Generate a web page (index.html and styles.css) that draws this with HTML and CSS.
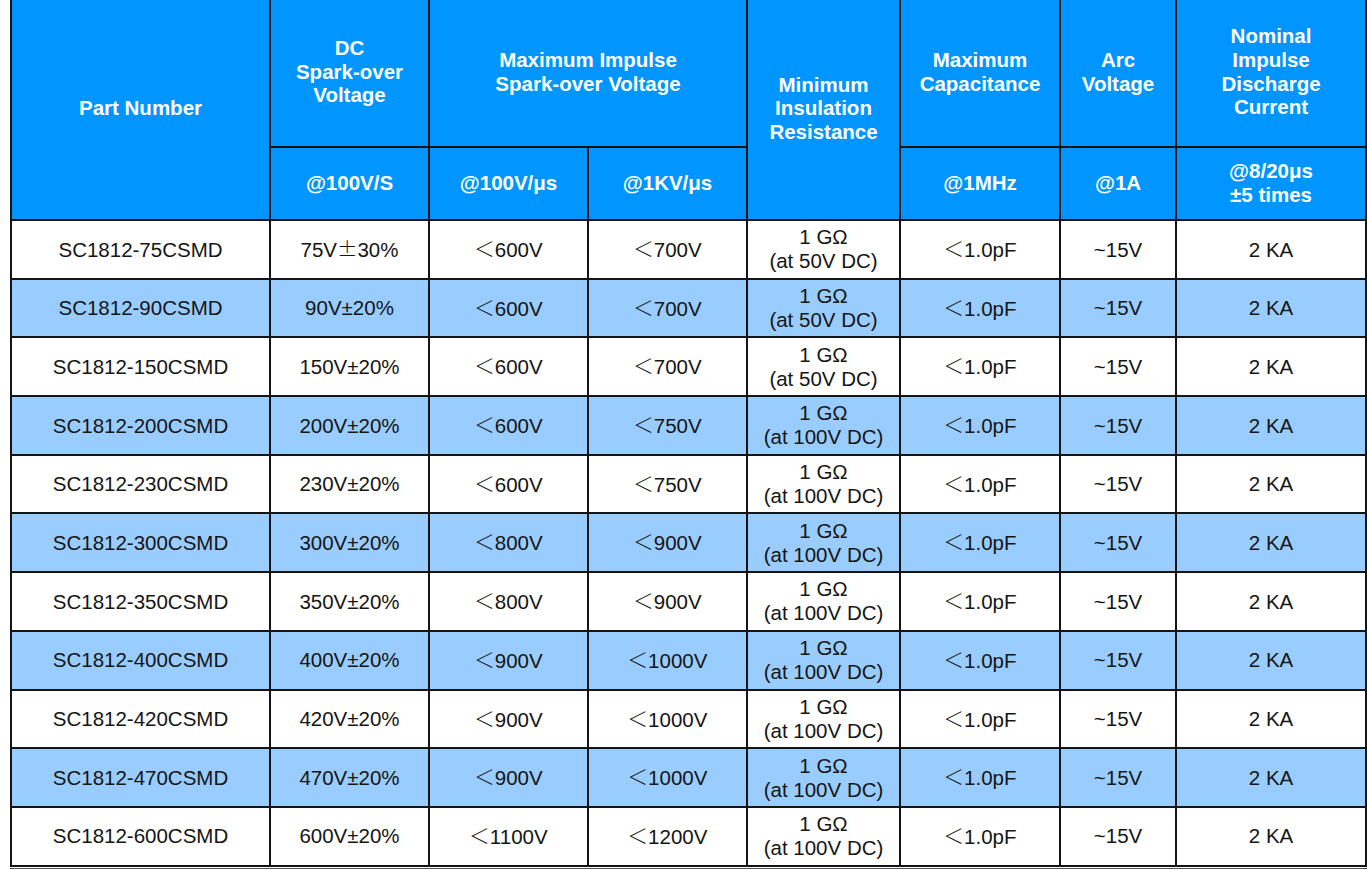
FILE: index.html
```html
<!DOCTYPE html>
<html>
<head>
<meta charset="utf-8">
<link rel="stylesheet" href="styles.css">
</head>
<body>
<div class="sheet">
<table class="spec">
  <colgroup>
    <col class="c-part"><col class="c-dc"><col class="c-imp"><col class="c-imp"><col class="c-ins"><col class="c-cap"><col class="c-arc"><col class="c-cur">
  </colgroup>
  <thead>
    <tr class="h1">
      <th rowspan="2">Part Number</th>
      <th>DC<br>Spark-over<br>Voltage</th>
      <th colspan="2">Maximum Impulse<br>Spark-over Voltage</th>
      <th rowspan="2" class="ins">Minimum<br>Insulation<br>Resistance</th>
      <th>Maximum<br>Capacitance</th>
      <th>Arc<br>Voltage</th>
      <th>Nominal<br>Impulse<br>Discharge<br>Current</th>
    </tr>
    <tr class="h2">
      <th>@100V/S</th>
      <th>@100V/μs</th>
      <th>@1KV/μs</th>
      <th>@1MHz</th>
      <th>@1A</th>
      <th>@8/20μs<br>±5 times</th>
    </tr>
  </thead>
  <tbody>
    <tr><td>SC1812-75CSMD</td><td>75V<span class="cjk">±</span>30%</td><td><span class="cjk">＜</span>600V</td><td><span class="cjk">＜</span>700V</td><td class="ins">1 GΩ<br>(at 50V DC)</td><td><span class="cjk">＜</span>1.0pF</td><td>~15V</td><td>2 KA</td></tr>
    <tr class="alt"><td>SC1812-90CSMD</td><td>90V±20%</td><td><span class="cjk">＜</span>600V</td><td><span class="cjk">＜</span>700V</td><td class="ins">1 GΩ<br>(at 50V DC)</td><td><span class="cjk">＜</span>1.0pF</td><td>~15V</td><td>2 KA</td></tr>
    <tr><td>SC1812-150CSMD</td><td>150V±20%</td><td><span class="cjk">＜</span>600V</td><td><span class="cjk">＜</span>700V</td><td class="ins">1 GΩ<br>(at 50V DC)</td><td><span class="cjk">＜</span>1.0pF</td><td>~15V</td><td>2 KA</td></tr>
    <tr class="alt"><td>SC1812-200CSMD</td><td>200V±20%</td><td><span class="cjk">＜</span>600V</td><td><span class="cjk">＜</span>750V</td><td class="ins">1 GΩ<br>(at 100V DC)</td><td><span class="cjk">＜</span>1.0pF</td><td>~15V</td><td>2 KA</td></tr>
    <tr><td>SC1812-230CSMD</td><td>230V±20%</td><td><span class="cjk">＜</span>600V</td><td><span class="cjk">＜</span>750V</td><td class="ins">1 GΩ<br>(at 100V DC)</td><td><span class="cjk">＜</span>1.0pF</td><td>~15V</td><td>2 KA</td></tr>
    <tr class="alt"><td>SC1812-300CSMD</td><td>300V±20%</td><td><span class="cjk">＜</span>800V</td><td><span class="cjk">＜</span>900V</td><td class="ins">1 GΩ<br>(at 100V DC)</td><td><span class="cjk">＜</span>1.0pF</td><td>~15V</td><td>2 KA</td></tr>
    <tr><td>SC1812-350CSMD</td><td>350V±20%</td><td><span class="cjk">＜</span>800V</td><td><span class="cjk">＜</span>900V</td><td class="ins">1 GΩ<br>(at 100V DC)</td><td><span class="cjk">＜</span>1.0pF</td><td>~15V</td><td>2 KA</td></tr>
    <tr class="alt"><td>SC1812-400CSMD</td><td>400V±20%</td><td><span class="cjk">＜</span>900V</td><td><span class="cjk">＜</span>1000V</td><td class="ins">1 GΩ<br>(at 100V DC)</td><td><span class="cjk">＜</span>1.0pF</td><td>~15V</td><td>2 KA</td></tr>
    <tr><td>SC1812-420CSMD</td><td>420V±20%</td><td><span class="cjk">＜</span>900V</td><td><span class="cjk">＜</span>1000V</td><td class="ins">1 GΩ<br>(at 100V DC)</td><td><span class="cjk">＜</span>1.0pF</td><td>~15V</td><td>2 KA</td></tr>
    <tr class="alt"><td>SC1812-470CSMD</td><td>470V±20%</td><td><span class="cjk">＜</span>900V</td><td><span class="cjk">＜</span>1000V</td><td class="ins">1 GΩ<br>(at 100V DC)</td><td><span class="cjk">＜</span>1.0pF</td><td>~15V</td><td>2 KA</td></tr>
    <tr><td>SC1812-600CSMD</td><td>600V±20%</td><td><span class="cjk">＜</span>1100V</td><td><span class="cjk">＜</span>1200V</td><td class="ins">1 GΩ<br>(at 100V DC)</td><td><span class="cjk">＜</span>1.0pF</td><td>~15V</td><td>2 KA</td></tr>
  </tbody>
</table>
<div class="next"></div>
</div>
</body>
</html>
```

FILE: styles.css
```css
html, body {
  margin: 0;
  padding: 0;
  background: #ffffff;
}
body {
  font-family: "Liberation Sans", Arial, sans-serif;
  color: #151515;
}
.sheet {
  padding-left: 10px;
  width: 1357px;
}
.spec {
  border-collapse: collapse;
  table-layout: fixed;
  width: 1357px;
  font-size: 20.5px;
  line-height: 23.6px;
}
.c-part { width: 259px; }
.c-dc { width: 159px; }
.c-imp { width: 159px; }
.c-ins { width: 153px; }
.c-cap { width: 160px; }
.c-arc { width: 116px; }
.c-cur { width: 190px; }

.spec th, .spec td {
  border: 2px solid #141414;
  text-align: center;
  vertical-align: middle;
  padding: 0;
}
.spec th {
  background: #0095ff;
  color: #ffffff;
  font-weight: bold;
  padding-bottom: 3px;
}
.spec .h1 th {
  border-top: none;
  height: 143px;
}
.spec .h2 th {
  height: 69px;
  padding-bottom: 2px;
}
.spec td {
  height: 56.7px;
  background: #ffffff;
}
.spec tr.alt td {
  background: #99ccff;
}
.spec td.ins {
  line-height: 24px;
}
.cjk {
  font-family: "Noto Sans CJK SC", "Liberation Sans", sans-serif;
  font-weight: 300;
}
.next {
  margin-top: 1px;
  height: 10px;
  border-top: 1px solid #555555;
  border-left: 2px solid #141414;
  border-right: 2px solid #141414;
  box-sizing: border-box;
}
```
